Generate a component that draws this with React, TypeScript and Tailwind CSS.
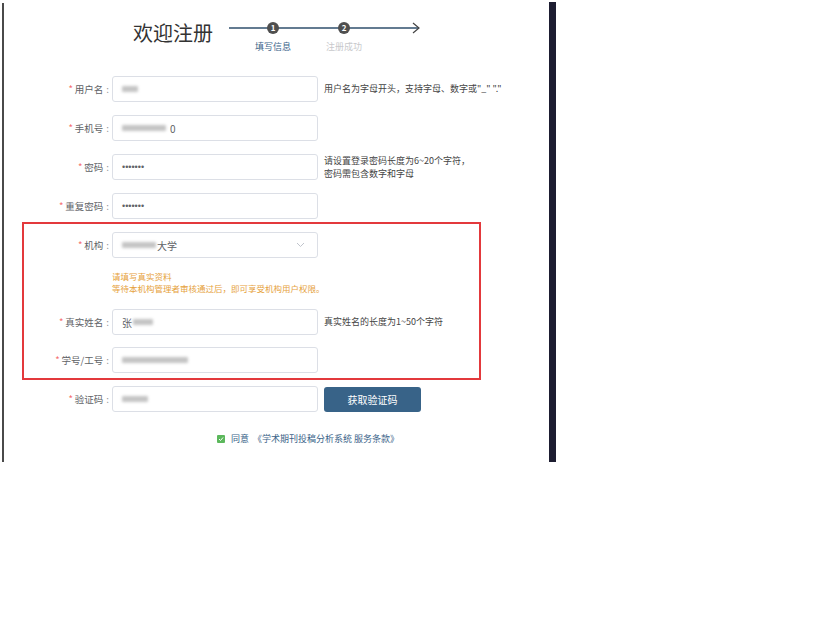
import React from 'react'

const font = "font-['Noto_Sans_CJK_SC','Noto_Sans',sans-serif]"

function Blur({ w, className = '' }: { w: number; className?: string }) {
  return (
    <span
      className={`inline-block h-[6px] rounded-[1px] bg-[#c4c4c4] blur-[1.5px] ${className}`}
      style={{ width: w }}
    />
  )
}

function Label({ text, width }: { text: string; width: number }) {
  return (
    <div className="flex shrink-0 items-center justify-end text-[9.5px] text-[#606266]" style={{ width }}>
      <span className="mr-[2px] text-[#f56c6c]">*</span>
      <span>{text}</span>
      <span className="ml-[3px] text-[#909399]">:</span>
    </div>
  )
}

function Field({ children }: { children?: React.ReactNode }) {
  return (
    <div className="ml-[3px] flex h-[26px] w-[206px] shrink-0 items-center rounded-[3px] border border-[#dcdfe6] bg-white px-[9px] text-[10px] text-[#606266]">
      {children}
    </div>
  )
}

function Dots() {
  return <span className="font-['Liberation_Sans',sans-serif] text-[9px] leading-none text-[#606266]">•••••••</span>
}

export default function App() {
  return (
    <div className={`flex h-[630px] w-[840px] items-start bg-white ${font}`}>
      <div className="ml-[2px] mt-[3px] h-[459px] w-[2px] shrink-0 bg-[#4a4a4a]" />

      <div className="flex h-[462px] w-[545px] shrink-0 flex-col">
        {/* header */}
        <div className="flex pt-[20px]">
          <div className="ml-[129px] w-[93px] text-[20px] leading-[26px] text-[#333]">欢迎注册</div>
          <div className="relative h-[40px] w-[196px]">
            <svg className="absolute left-0 top-0" width="196" height="16" viewBox="0 0 196 16">
              <line x1="3" y1="8" x2="193" y2="8" stroke="#2f4f6c" strokeWidth="1.3" />
              <polyline points="187,3 193,8 187,13" fill="none" stroke="#444" strokeWidth="1.2" />
            </svg>
            <div className="relative flex">
              <div className="ml-[23px] flex w-[48px] flex-col items-center">
                <div className="mt-[2px] flex h-[12px] w-[12px] items-center justify-center rounded-full bg-[#4f4f4f] text-[8px] font-bold leading-none text-white">
                  1
                </div>
                <div className="mt-[7px] text-[9px] leading-[12px] text-[#3a6389]">填写信息</div>
              </div>
              <div className="ml-[23px] flex w-[48px] flex-col items-center">
                <div className="mt-[2px] flex h-[12px] w-[12px] items-center justify-center rounded-full bg-[#4f4f4f] text-[8px] font-bold leading-none text-white">
                  2
                </div>
                <div className="mt-[7px] text-[9px] leading-[12px] text-[#c8c9cc]">注册成功</div>
              </div>
            </div>
          </div>
        </div>

        {/* form */}
        <div className="mt-[16px] flex flex-col">
          <div className="mb-[13px] flex h-[26px] items-center">
            <Label text="用户名" width={105} />
            <Field>
              <Blur w={16} />
            </Field>
            <div className="ml-[6px] whitespace-nowrap text-[9px] text-[#444]">用户名为字母开头，支持字母、数字或"_" "."</div>
          </div>

          <div className="mb-[13px] flex h-[26px] items-center">
            <Label text="手机号" width={105} />
            <Field>
              <Blur w={44} />
              <span className="ml-[4px]">0</span>
            </Field>
          </div>

          <div className="mb-[13px] flex h-[26px] items-center">
            <Label text="密码" width={105} />
            <Field>
              <Dots />
            </Field>
            <div className="ml-[6px] text-[9px] leading-[13px] text-[#444]">
              <div>请设置登录密码长度为6~20个字符，</div>
              <div>密码需包含数字和字母</div>
            </div>
          </div>

          <div className="mb-[3px] flex h-[26px] items-center">
            <Label text="重复密码" width={105} />
            <Field>
              <Dots />
            </Field>
          </div>

          {/* highlighted block */}
          <div className="ml-[18px] w-[459px] border-2 border-[#e3393c] pb-[5px] pt-[8px]">
            <div className="flex h-[26px] items-center">
              <Label text="机构" width={85} />
              <Field>
                <Blur w={34} />
                <span className="ml-[1px]">大学</span>
                <svg className="ml-auto mr-[3px]" width="9" height="6" viewBox="0 0 9 6">
                  <polyline points="1,1 4.5,4.5 8,1" fill="none" stroke="#c0c4cc" strokeWidth="1" />
                </svg>
              </Field>
            </div>
            <div className="ml-[88px] mt-[12px] text-[8.5px] leading-[12px] text-[#e6a23c]">
              <div>请填写真实资料</div>
              <div>等待本机构管理者审核通过后，即可享受机构用户权限。</div>
            </div>
            <div className="mt-[15px] flex h-[26px] items-center">
              <Label text="真实姓名" width={85} />
              <Field>
                <span>张</span>
                <Blur w={20} className="ml-[1px]" />
              </Field>
              <div className="ml-[6px] whitespace-nowrap text-[9px] text-[#444]">真实姓名的长度为1~50个字符</div>
            </div>
            <div className="mt-[12px] flex h-[26px] items-center">
              <Label text="学号/工号" width={85} />
              <Field>
                <Blur w={66} />
              </Field>
            </div>
          </div>

          <div className="mt-[6px] flex h-[26px] items-center">
            <Label text="验证码" width={105} />
            <Field>
              <Blur w={26} />
            </Field>
            <button className="ml-[6px] h-[25px] w-[97px] rounded-[3px] bg-[#386388] text-[10px] text-white">
              获取验证码
            </button>
          </div>

          <div className="ml-[213px] mt-[20px] flex items-center text-[9px] text-[#3a6389]">
            <span className="flex h-[8px] w-[8px] items-center justify-center rounded-[1px] bg-[#5cb85c]">
              <svg width="6" height="6" viewBox="0 0 6 6">
                <polyline points="1,3 2.5,4.5 5,1.5" fill="none" stroke="#fff" strokeWidth="1" />
              </svg>
            </span>
            <span className="ml-[6px]">同意</span>
            <span className="ml-[4px]">《学术期刊投稿分析系统 服务条款》</span>
          </div>
        </div>
      </div>

      <div className="mt-[2px] h-[460px] w-[7px] shrink-0 bg-[#1d1d31]" />
    </div>
  )
}
